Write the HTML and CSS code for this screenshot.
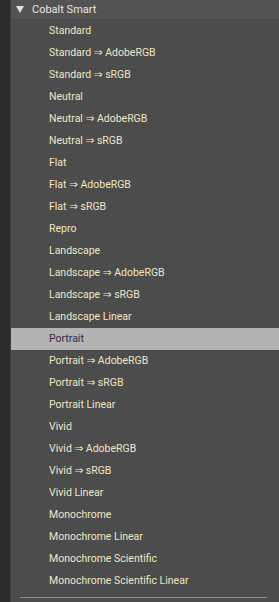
FILE: index.html
```html
<!DOCTYPE html>
<html lang="en">

<head>
  <meta charset="UTF-8">
  <title>Profiles</title>
  <link rel="stylesheet" href="styles.css">
</head>

<body>
  <div class="shell">
    <div class="gutter"></div>
    <div class="panel">
      <div class="group-head">
        <span class="caret"></span>
        <span>Cobalt Smart</span>
      </div>
      <ul class="list">
        <li>Standard</li>
        <li>Standard &rArr; AdobeRGB</li>
        <li>Standard &rArr; sRGB</li>
        <li>Neutral</li>
        <li>Neutral &rArr; AdobeRGB</li>
        <li>Neutral &rArr; sRGB</li>
        <li>Flat</li>
        <li>Flat &rArr; AdobeRGB</li>
        <li>Flat &rArr; sRGB</li>
        <li>Repro</li>
        <li>Landscape</li>
        <li>Landscape &rArr; AdobeRGB</li>
        <li>Landscape &rArr; sRGB</li>
        <li>Landscape Linear</li>
        <li class="selected">Portrait</li>
        <li>Portrait &rArr; AdobeRGB</li>
        <li>Portrait &rArr; sRGB</li>
        <li>Portrait Linear</li>
        <li>Vivid</li>
        <li>Vivid &rArr; AdobeRGB</li>
        <li>Vivid &rArr; sRGB</li>
        <li>Vivid Linear</li>
        <li>Monochrome</li>
        <li>Monochrome Linear</li>
        <li>Monochrome Scientific</li>
        <li>Monochrome Scientific Linear</li>
      </ul>
      <div class="divider"></div>
    </div>
  </div>
</body>

</html>
```

FILE: styles.css
```css
html,
body {
  margin: 0;
  height: 100%;
  background: #2c2c2c;
}

body {
  font-family: Roboto, "DejaVu Sans", sans-serif;
  font-size: 10.5px;
  color: #ece6c6;
}

.shell {
  display: flex;
  height: 602px;
  overflow: hidden;
}

.gutter {
  width: 10px;
  background: #2c2c2c;
  border-right: 1px solid #3e3e3e;
}

.panel {
  flex: 1;
  background: #4c4c4c;
  display: flex;
  flex-direction: column;
}

.group-head {
  height: 20px;
  display: flex;
  align-items: center;
  gap: 8px;
  padding-left: 5px;
  padding-bottom: 1px;
  background: #535353;
  color: #e4e4e4;
  font-size: 11px;
  border-bottom: 1px solid #4a4a4a;
  box-sizing: border-box;
}

.caret {
  width: 0;
  height: 0;
  border-left: 4px solid transparent;
  border-right: 4px solid transparent;
  border-top: 7px solid #e0e0e0;
}

.list {
  list-style: none;
  margin: 0;
  padding: 0;
}

.list li {
  height: 22px;
  line-height: 22px;
  padding-left: 38px;
  white-space: nowrap;
}

.list li.selected {
  background: #b3b3b3;
  color: #2e2e48;
}

.divider {
  margin: 5px 12px 0 9px;
  border-top: 1px solid #8c8c8c;
}
```
